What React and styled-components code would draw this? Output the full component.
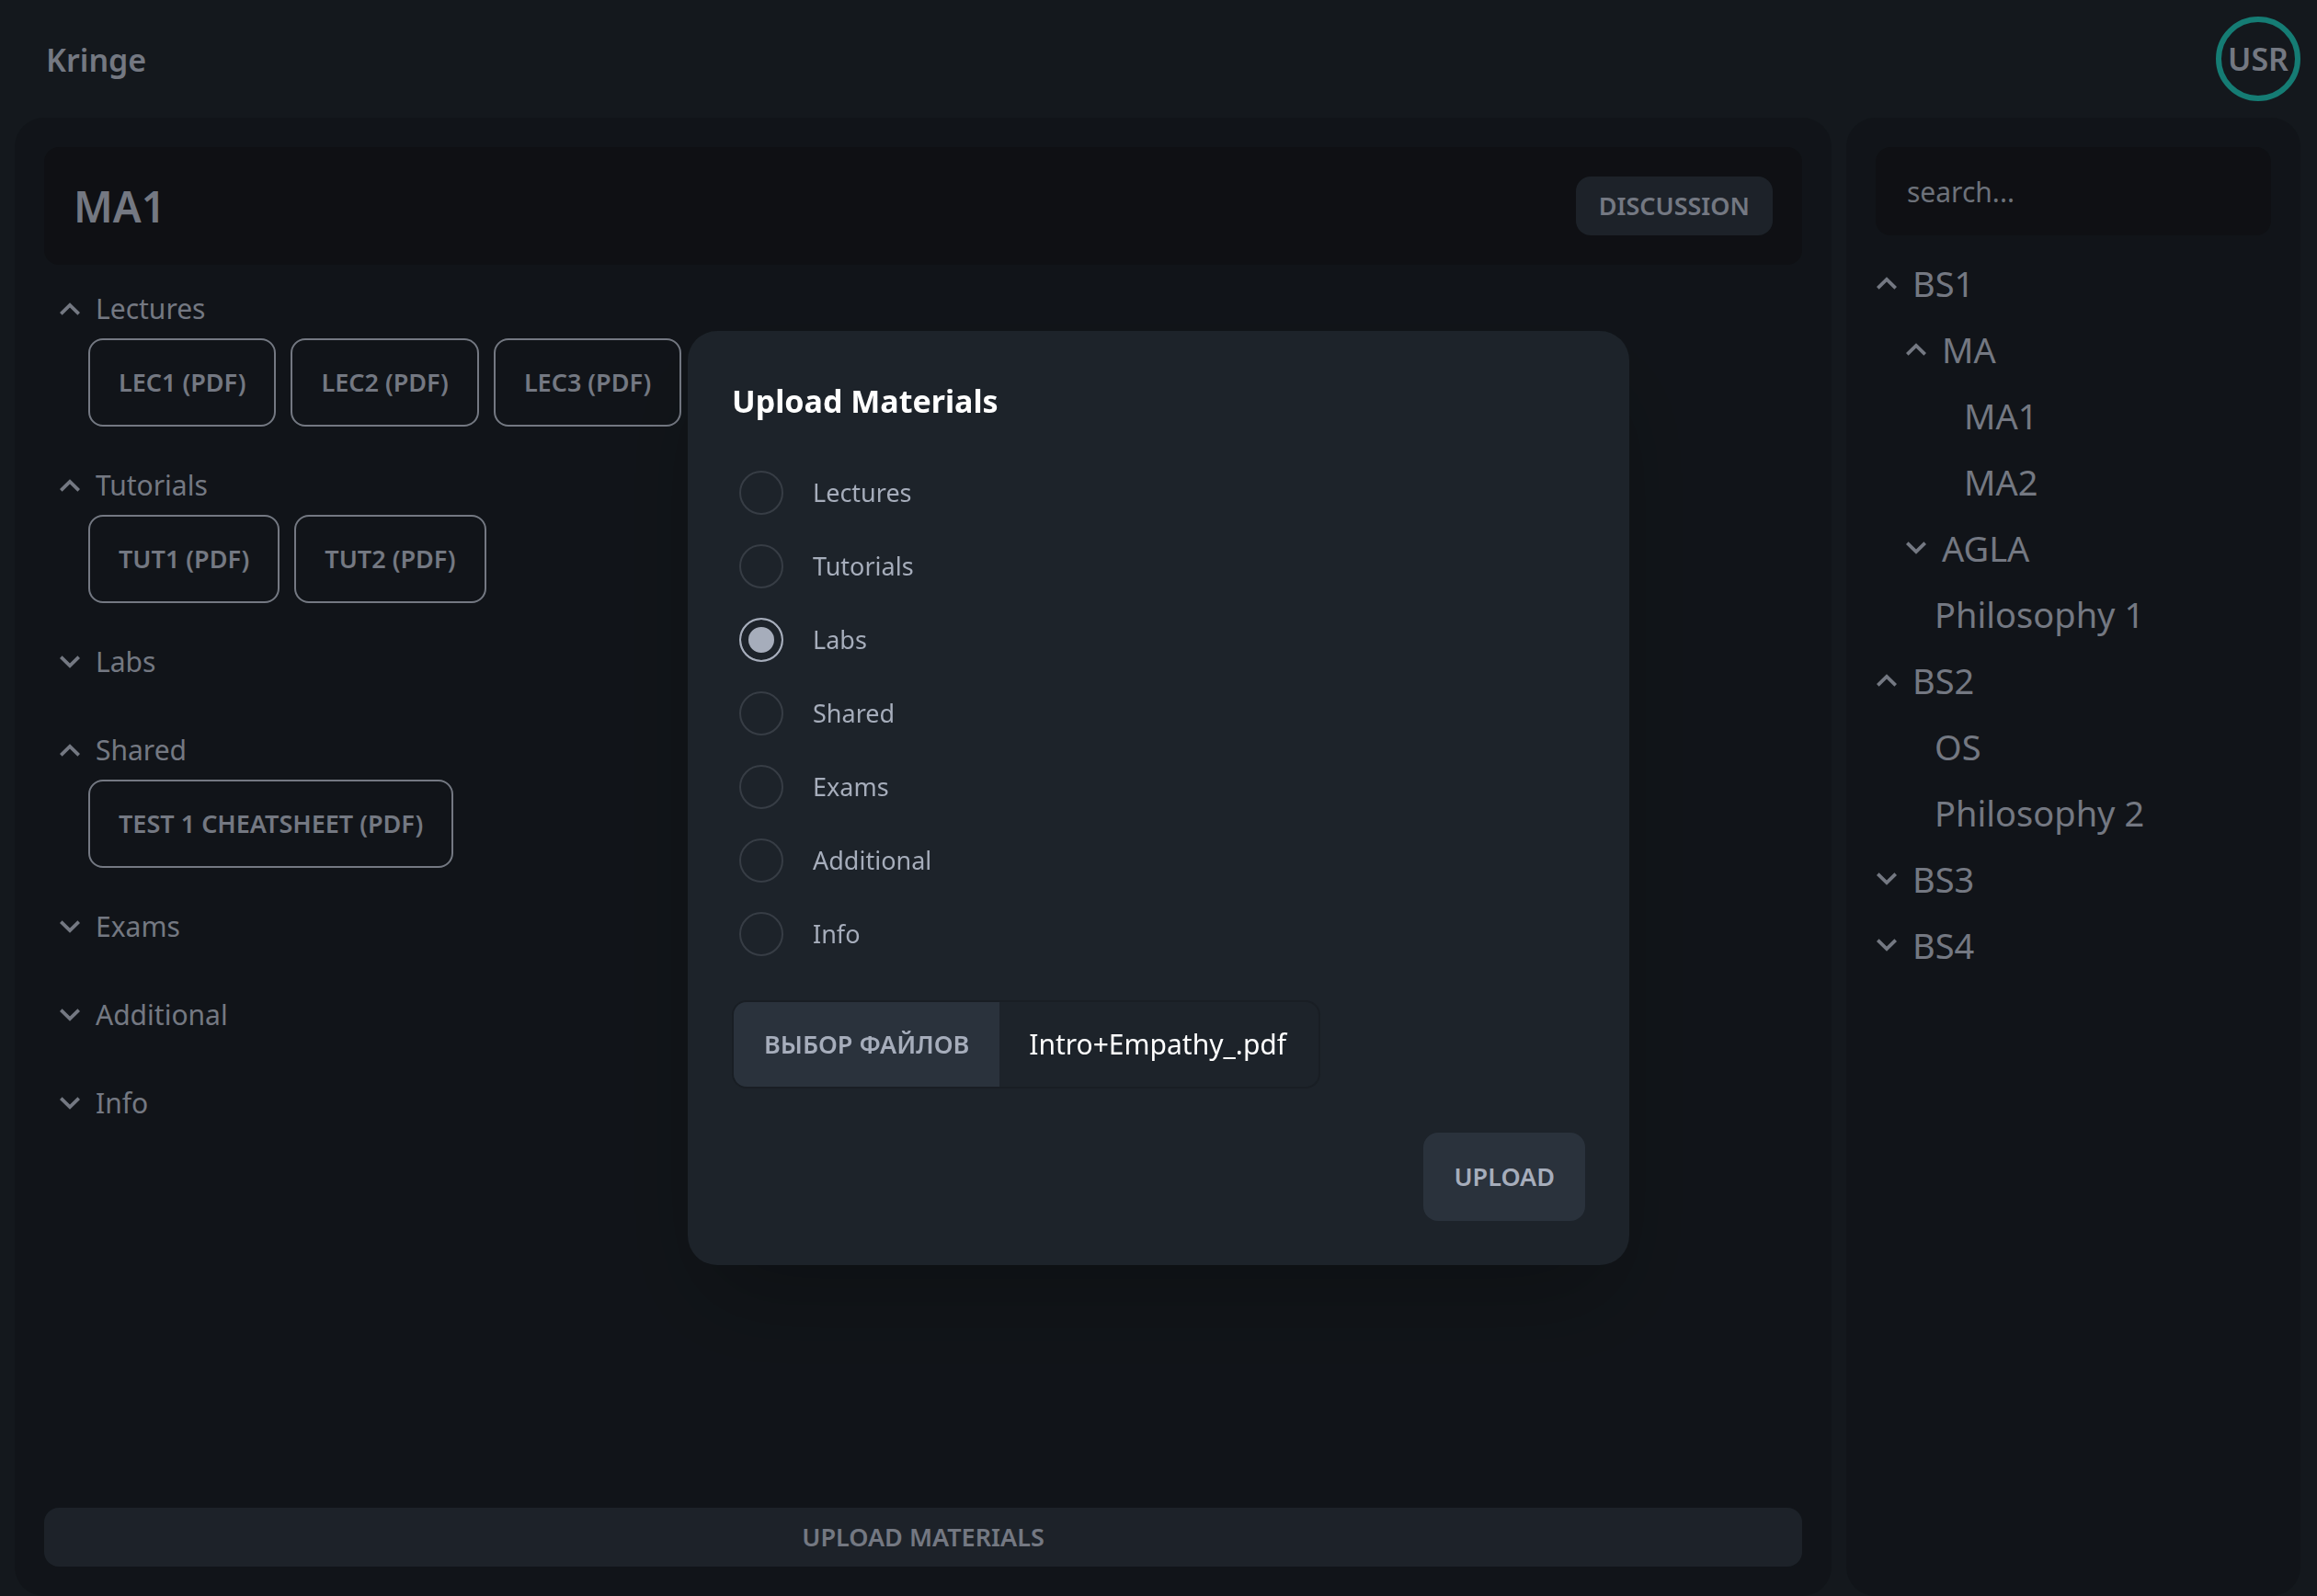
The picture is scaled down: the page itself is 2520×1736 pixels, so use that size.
import React, { useState } from "react";
import styled, { createGlobalStyle } from "styled-components";

const sections = [
  { name: "Lectures", open: true, files: ["Lec1 (pdf)", "Lec2 (pdf)", "Lec3 (pdf)"] },
  { name: "Tutorials", open: true, files: ["Tut1 (pdf)", "Tut2 (pdf)"] },
  { name: "Labs", open: false, files: [] },
  { name: "Shared", open: true, files: ["Test 1 Cheatsheet (pdf)"] },
  { name: "Exams", open: false, files: [] },
  { name: "Additional", open: false, files: [] },
  { name: "Info", open: false, files: [] },
];

const courses = [
  {
    name: "BS1",
    open: true,
    children: [
      { name: "MA", open: true, children: [{ name: "MA1" }, { name: "MA2" }] },
      { name: "AGLA", open: false, children: [] },
      { name: "Philosophy 1" },
    ],
  },
  { name: "BS2", open: true, children: [{ name: "OS" }, { name: "Philosophy 2" }] },
  { name: "BS3", open: false, children: [] },
  { name: "BS4", open: false, children: [] },
];

const Chevron = ({ open }) => (
  <ChevronIcon viewBox="0 0 24 24" aria-hidden="true">
    {open ? (
      <path d="M12 5.2 23 16.1 20.4 18.8 12 10.4 3.6 18.8 1 16.1Z" />
    ) : (
      <path d="M12 18.8 1 7.9 3.6 5.2 12 13.6 20.4 5.2 23 7.9Z" />
    )}
  </ChevronIcon>
);

const Section = ({ section }) => {
  const [open, setOpen] = useState(section.open);
  return (
    <SectionWrap>
      <SectionToggle type="button" aria-expanded={open} onClick={() => setOpen(!open)}>
        <Chevron open={open} />
        {section.name}
      </SectionToggle>
      {open && (
        <Files>
          {section.files.map((file) => (
            <FileLink href="#" key={file}>
              {file}
            </FileLink>
          ))}
        </Files>
      )}
    </SectionWrap>
  );
};

const TreeNode = ({ node, depth }) => {
  const [open, setOpen] = useState(node.open);
  if (!node.children) {
    return (
      <li>
        <TreeLink href="#" $depth={depth}>
          {node.name}
        </TreeLink>
      </li>
    );
  }
  return (
    <li>
      <TreeToggle type="button" $depth={depth} aria-expanded={open} onClick={() => setOpen(!open)}>
        <Chevron open={open} />
        {node.name}
      </TreeToggle>
      {open && (
        <Tree>
          {node.children.map((child) => (
            <TreeNode key={child.name} node={child} depth={depth + 1} />
          ))}
        </Tree>
      )}
    </li>
  );
};

const UploadModal = () => {
  const [type, setType] = useState("Labs");
  const [fileName, setFileName] = useState("Intro+Empathy_.pdf");
  return (
    <Backdrop>
      <Modal role="dialog" aria-modal="true" aria-labelledby="upload-title">
        <ModalTitle id="upload-title">Upload Materials</ModalTitle>
        <RadioList>
          {sections.map(({ name }) => (
            <RadioRow key={name}>
              <Radio
                type="radio"
                name="type"
                value={name}
                checked={type === name}
                onChange={() => setType(name)}
              />
              {name}
            </RadioRow>
          ))}
        </RadioList>
        <FilePicker>
          <FileInput
            type="file"
            onChange={(e) => e.target.files[0] && setFileName(e.target.files[0].name)}
          />
          <FileButton>Выбор файлов</FileButton>
          <FileName>{fileName}</FileName>
        </FilePicker>
        <ModalAction>
          <Button type="button">Upload</Button>
        </ModalAction>
      </Modal>
    </Backdrop>
  );
};

const App = () => {
  return (
    <>
      <GlobalStyle />
      <Page>
        <Navbar>
          <Brand href="#">Kringe</Brand>
          <Avatar type="button">USR</Avatar>
        </Navbar>
        <Columns>
          <Panel as="main">
            <CourseHeader>
              <CourseTitle>MA1</CourseTitle>
              <Button type="button" $small>
                Discussion
              </Button>
            </CourseHeader>
            <Sections>
              {sections.map((section) => (
                <Section key={section.name} section={section} />
              ))}
            </Sections>
            <Button type="button" $small>
              Upload Materials
            </Button>
          </Panel>
          <Panel as="aside">
            <Search type="text" placeholder="search..." aria-label="search" />
            <Tree>
              {courses.map((node) => (
                <TreeNode key={node.name} node={node} depth={0} />
              ))}
            </Tree>
          </Panel>
        </Columns>
      </Page>
      <UploadModal />
    </>
  );
};

export default App;

const GlobalStyle = createGlobalStyle`
  * {
    box-sizing: border-box;
  }
  body {
    margin: 0;
    background: #1d232a;
    color: #a6adbb;
    font-family: "Segoe UI", "Noto Sans", sans-serif;
    font-size: 30px;
    line-height: 48px;
  }
  button, input {
    font: inherit;
    color: inherit;
  }
  a {
    color: inherit;
    text-decoration: none;
  }
`;

const Page = styled.div`
  min-height: 100vh;
  display: flex;
  flex-direction: column;
  padding: 0 18px 0 16px;
`;

const Navbar = styled.header`
  height: 128px;
  display: flex;
  justify-content: space-between;
  align-items: center;
`;

const Brand = styled.a`
  padding: 2px 34px 0;
  font-size: 34px;
  font-weight: 600;
`;

const Avatar = styled.button`
  width: 92px;
  height: 92px;
  display: flex;
  justify-content: center;
  align-items: center;
  padding: 0;
  border: 6px solid #1fb2a6;
  border-radius: 50%;
  background: none;
  font-size: 34px;
  font-weight: 600;
  cursor: pointer;
`;

const Columns = styled.div`
  flex: 1;
  display: grid;
  grid-template-columns: 4fr 1fr;
  gap: 16px;
`;

const Panel = styled.div`
  min-width: 0;
  display: flex;
  flex-direction: column;
  gap: 16px;
  padding: 32px;
  border-radius: 32px;
  background: #191e24;
`;

const CourseHeader = styled.div`
  display: flex;
  justify-content: space-between;
  align-items: center;
  padding: 32px;
  border-radius: 16px;
  background: #16181d;
`;

const CourseTitle = styled.h1`
  margin: 0;
  font-size: 46px;
  font-weight: 600;
  line-height: 64px;
`;

const Button = styled.button`
  height: ${({ $small }) => ($small ? 64 : 96)}px;
  padding: 0 ${({ $small }) => ($small ? 25 : 33)}px;
  border: 0;
  border-radius: 16px;
  background: #2a323c;
  font-size: 27px;
  font-weight: 600;
  line-height: 32px;
  text-transform: uppercase;
  cursor: pointer;
`;

const Sections = styled.div`
  flex: 1;
  display: flex;
  flex-direction: column;
  gap: 32px;
  padding: 0 16px;
`;

const SectionWrap = styled.section`
  display: flex;
  flex-direction: column;
`;

const SectionToggle = styled.button`
  height: 64px;
  display: flex;
  align-items: center;
  gap: 16px;
  padding: 0;
  border: 0;
  background: none;
  cursor: pointer;
`;

const ChevronIcon = styled.svg`
  flex: none;
  width: 24px;
  height: 24px;
  fill: currentColor;
`;

const Files = styled.div`
  display: flex;
  flex-wrap: wrap;
  gap: 16px;
  padding-left: 32px;
`;

const FileLink = styled.a`
  height: 96px;
  display: flex;
  align-items: center;
  padding: 0 31px;
  border: 2px solid #a6adbb;
  border-radius: 16px;
  font-size: 27px;
  font-weight: 600;
  text-transform: uppercase;
`;

const Search = styled.input`
  width: 100%;
  height: 96px;
  padding: 0 34px;
  border: 0;
  border-radius: 16px;
  background: #16181d;

  &::placeholder {
    color: #9ca3af;
    opacity: 1;
  }
`;

const Tree = styled.ul`
  margin: 0;
  padding: 0;
  list-style: none;
`;

const TreeToggle = styled.button`
  height: 72px;
  display: flex;
  align-items: center;
  gap: 16px;
  padding: 0 0 0 ${({ $depth }) => $depth * 32}px;
  border: 0;
  background: none;
  font-size: 38px;
  cursor: pointer;
`;

const TreeLink = styled.a`
  height: 72px;
  display: flex;
  align-items: center;
  padding-left: ${({ $depth }) => $depth * 32 + 32}px;
  font-size: 38px;
`;

const Backdrop = styled.div`
  position: fixed;
  inset: 0;
  display: flex;
  justify-content: center;
  align-items: center;
  background: rgba(0, 0, 0, 0.3);
`;

const Modal = styled.div`
  width: 1024px;
  max-width: 90%;
  display: flex;
  flex-direction: column;
  align-items: flex-start;
  gap: 32px;
  padding: 48px;
  border-radius: 32px;
  background: #1d232a;
  box-shadow: 0 50px 100px -24px rgba(0, 0, 0, 0.25);
`;

const ModalTitle = styled.h2`
  margin: 0;
  color: #fff;
  font-size: 34px;
  font-weight: 700;
  line-height: 56px;
`;

const RadioList = styled.div`
  display: flex;
  flex-direction: column;
`;

const RadioRow = styled.label`
  height: 80px;
  display: flex;
  align-items: center;
  gap: 32px;
  padding: 0 8px;
  font-size: 27px;
  cursor: pointer;
`;

const Radio = styled.input`
  appearance: none;
  width: 48px;
  height: 48px;
  margin: 0;
  border: 2px solid #373d45;
  border-radius: 50%;

  &:checked {
    border-color: #a6adbb;
    background: #a6adbb;
    box-shadow: 0 0 0 8px #1d232a inset;
  }
`;

const FilePicker = styled.label`
  width: 640px;
  max-width: 100%;
  height: 96px;
  display: flex;
  border: 2px solid #191e24;
  border-radius: 16px;
  overflow: hidden;
  cursor: pointer;
`;

const FileInput = styled.input`
  width: 0;
  opacity: 0;
`;

const FileButton = styled.span`
  display: flex;
  align-items: center;
  padding: 0 33px;
  background: #2a323c;
  font-size: 27px;
  font-weight: 600;
  text-transform: uppercase;
`;

const FileName = styled.span`
  display: flex;
  align-items: center;
  padding-left: 32px;
  color: #fff;
`;

const ModalAction = styled.div`
  align-self: flex-end;
  padding-top: 16px;
`;
